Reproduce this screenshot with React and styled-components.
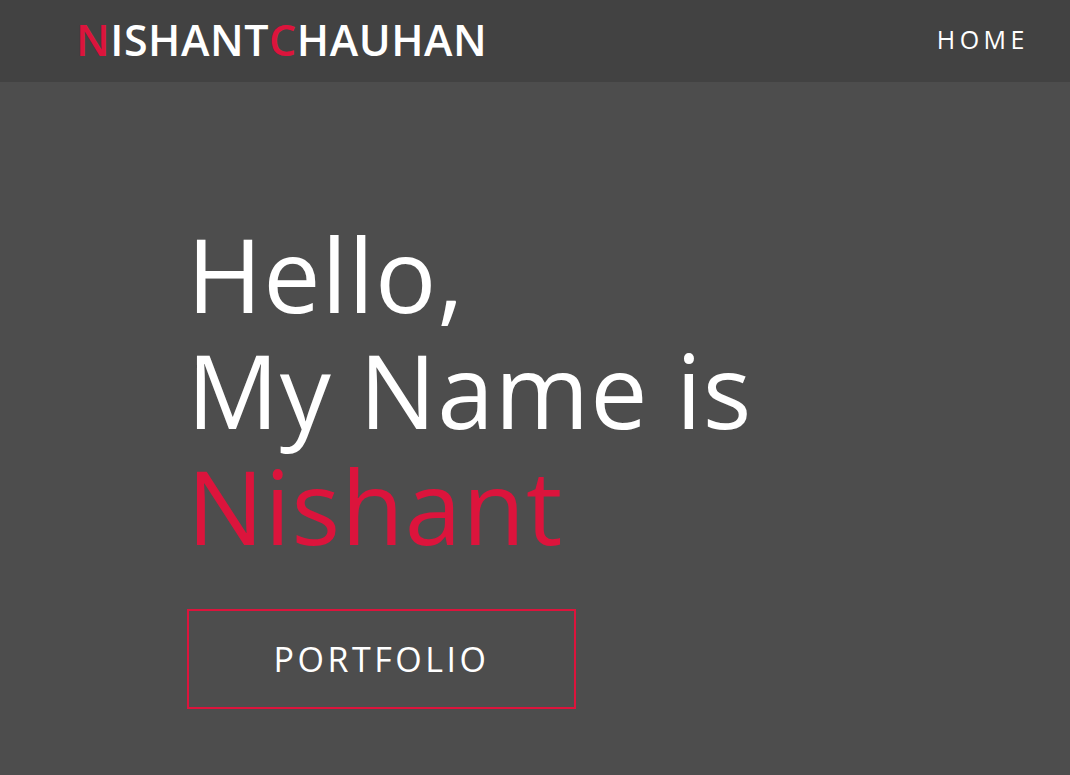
import React from "react";
import styled, { createGlobalStyle } from "styled-components";

const Global = createGlobalStyle`
  html, body { margin: 0; padding: 0; background: #4d4d4d; }
  body { font-family: "Open Sans", "Liberation Sans", sans-serif; }
  * { box-sizing: border-box; }
`;

const Page = styled.div`
  min-height: 775px;
  background: #4d4d4d;
  display: flex;
  flex-direction: column;
`;

const Header = styled.header`
  height: 82px;
  background: #424242;
  display: flex;
  align-items: center;
  justify-content: space-between;
  padding: 0 41px 4px 76px;
`;

const Logo = styled.div`
  font-size: 43px;
  font-weight: 600;
  color: #ffffff;
  letter-spacing: 0.55px;
  line-height: 1;
`;

const Accent = styled.span`
  color: #dc143c;
`;

const NavLink = styled.a`
  color: #ffffff;
  font-size: 25px;
  letter-spacing: 4.5px;
  text-decoration: none;
`;

const Hero = styled.section`
  padding: 134px 0 0 187px;
  display: flex;
  flex-direction: column;
  align-items: flex-start;
`;

const Title = styled.h1`
  margin: 0;
  font-size: 102px;
  font-weight: 500;
  line-height: 116px;
  letter-spacing: 1px;
  color: #ffffff;
`;

const Line = styled.span`
  display: block;
  color: ${(p) => (p.$accent ? "#dc143c" : "#ffffff")};
`;

const Button = styled.a`
  margin-top: 45px;
  width: 389px;
  height: 100px;
  border: 2px solid #dc143c;
  display: flex;
  align-items: center;
  justify-content: center;
  color: #ffffff;
  font-size: 34px;
  letter-spacing: 3.5px;
  text-decoration: none;
`;

export default function App() {
  return (
    <Page>
      <Global />
      <Header>
        <Logo>
          <Accent>N</Accent>ISHANT<Accent>C</Accent>HAUHAN
        </Logo>
        <NavLink href="#">HOME</NavLink>
      </Header>
      <Hero>
        <Title>
          <Line>Hello,</Line>
          <Line>My Name is</Line>
          <Line $accent>Nishant</Line>
        </Title>
        <Button href="#">PORTFOLIO</Button>
      </Hero>
    </Page>
  );
}
